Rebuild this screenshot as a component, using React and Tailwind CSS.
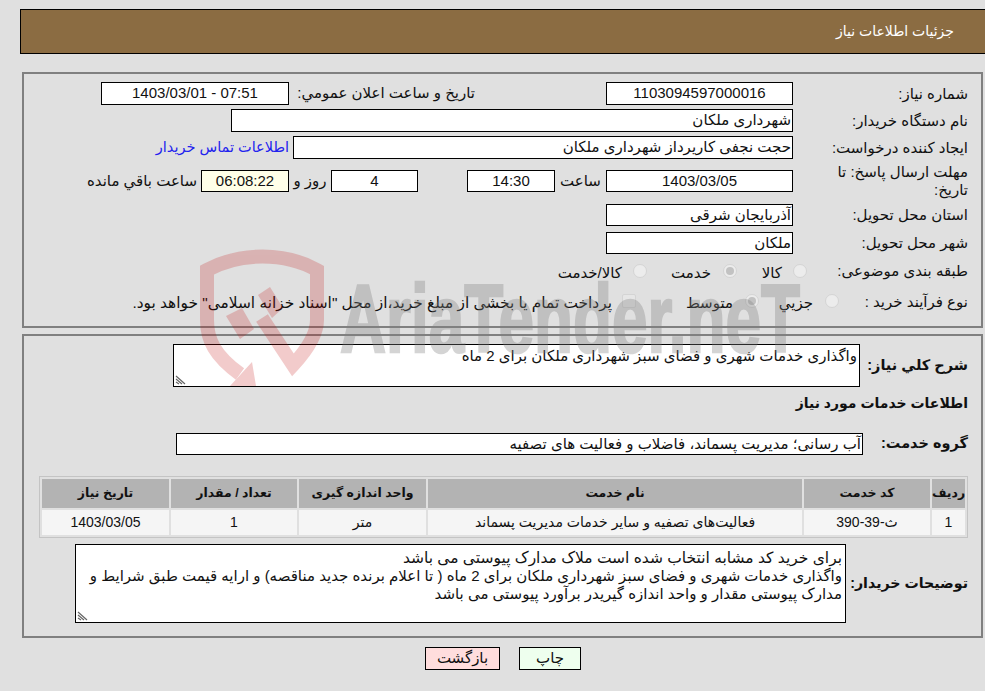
const F = ({ w, h = 22, c = "", children, bg = "bg-white" }) => (
  <div className={`shrink-0 border border-black leading-[20px] ${bg} ${c}`} style={{ width: w, height: h }}>{children}</div>
);
const Radio = ({ on }) => (
  <span className="w-[14px] h-[14px] rounded-full border border-[#d4d4d4] bg-[#ececec] flex items-center justify-center shrink-0">
    {on && <span className="w-2 h-2 rounded-full bg-[#c2c2c2]" />}
  </span>
);
const Row = ({ label, h, w = 175, children, c = "" }) => (
  <div className={`flex items-center ${c}`} style={{ height: h }}>
    <div className="shrink-0 leading-[18px]" style={{ width: w }}>{label}</div>
    {children}
  </div>
);
const Grip = () => (
  <svg className="absolute left-[1px] bottom-[1px]" width="12" height="12" viewBox="0 0 12 12">
    <path d="M1 3L10 11M1 6L7 11M1 9L4 11" stroke="#666" strokeWidth="1.2" fill="none" />
  </svg>
);
export default function App() {
  return (
    <div dir="rtl" className="relative w-[985px] h-[691px] overflow-hidden bg-[#e0e0e0] text-[15px] text-[#111] font-['Liberation_Sans','DejaVu_Sans',sans-serif]">
      <div className="pt-[9px] pl-[20px]">
        <div className="h-[45px] border border-r-0 border-black bg-[#8b6c42] text-white text-[14px] flex items-center pr-[31px]">جزئیات اطلاعات نیاز</div>
      </div>
      <div className="mt-[18px] ml-[22px] mr-[2px] h-[256px] border-2 border-[#808080] pr-[13px] pt-[6px]">
        <Row label="شماره نیاز:" h={27}>
          <F w={187} h={23} c="text-center ml-[131px]">1103094597000016</F>
          <div className="w-[186px]">تاریخ و ساعت اعلان عمومي:</div>
          <F w={188} h={23} c="text-center"><span dir="ltr">1403/03/01 - 07:51</span></F>
        </Row>
        <Row label="نام دستگاه خریدار:" h={27}>
          <F w={562} h={23} c="pr-[1px]">شهرداری ملکان</F>
        </Row>
        <Row label="ایجاد کننده درخواست:" h={27}>
          <F w={500} h={23} c="pr-[1px]">حجت نجفی کاریرداز شهرداری ملکان</F>
          <div className="mr-[4px] text-[#2222ee] text-[14.5px]">اطلاعات تماس خریدار</div>
        </Row>
        <Row label={<>مهلت ارسال پاسخ: تا<br />تاریخ:</>} h={40}>
          <F w={187} c="text-center">1403/03/05</F>
          <div className="w-[51px] text-center">ساعت</div>
          <F w={88} c="text-center">14:30</F>
          <div className="w-[49px]" />
          <F w={87} c="text-center">4</F>
          <div className="w-[42px] text-center">روز و</div>
          <F w={88} bg="bg-[#ffffe8]" c="text-center">06:08:22</F>
          <div className="mr-[4px]">ساعت باقي مانده</div>
        </Row>
        <Row label="استان محل تحویل:" h={28}>
          <F w={187} c="pr-[1px]">آذربایجان شرقی</F>
        </Row>
        <Row label="شهر محل تحویل:" h={27}>
          <F w={187} c="pr-[1px]">ملکان</F>
        </Row>
        <Row label="طبقه بندی موضوعی:" h={29} w={161}>
          <div className="flex items-center">
            <Radio /><span className="w-[45px] mr-[11px] pt-[5px]">کالا</span>
            <Radio on /><span className="w-[64px] mr-[12px] pt-[5px]">خدمت</span>
            <Radio /><span className="mr-[11px] pt-[5px]">کالا/خدمت</span>
          </div>
        </Row>
        <Row label="نوع فرآیند خرید :" h={33} w={129}>
          <div className="flex items-center">
            <Radio /><span className="w-[54px] mr-[12px] pt-[3px]">جزیي</span>
            <Radio on /><span className="w-[97px] mr-[12px] pt-[3px]">متوسط</span>
            <span className="w-[14px] h-[14px] rounded-[2px] border border-[#d4d4d4] bg-[#e6e6e6] shrink-0" />
            <span className="mr-[10px] pt-[3px] whitespace-nowrap text-[15.4px]">پرداخت تمام یا بخشی از مبلغ خرید،از محل "اسناد خزانه اسلامی" خواهد بود.</span>
          </div>
        </Row>
      </div>
      <div className="mt-[6px] ml-[22px] mr-[2px] h-[304px] border-2 border-[#808080] pr-[13px] pt-[8px]">
        <div className="flex items-center h-[45px] pb-[2px]">
          <div className="w-[108px] shrink-0 font-bold text-[14.5px]">شرح كلي نیاز:</div>
          <F w={687} h={43} c="relative pr-[2px] pt-[1px] self-start">واگذاری خدمات شهری و فضای سبز شهرداری ملکان برای 2 ماه<Grip /></F>
        </div>
        <div className="font-bold text-[14px] h-[29px] flex items-center">اطلاعات خدمات مورد نیاز</div>
        <div className="flex items-center h-[52px]">
          <div className="w-[105px] shrink-0 font-bold text-[14.5px]">گروه خدمت:</div>
          <F w={687} h={22} c="pr-[1px]">آب رسانی؛ مدیریت پسماند، فاضلاب و فعالیت های تصفیه</F>
        </div>
        <div className="mt-[6px] ml-[15px] border border-[#c4c4c4] p-[2px]">
          <div className="grid grid-cols-[33px_126px_374px_127px_126px_127px] gap-[2px] text-center">
            {["ردیف","کد خدمت","نام خدمت","واحد اندازه گیری","تعداد / مقدار","تاریخ نیاز"].map(t => (
              <div key={t} className="h-[29px] bg-[#b3b3b3] font-bold text-[12.5px] flex items-center justify-center whitespace-nowrap">{t}</div>
            ))}
            {["1","ث-39-390","فعالیت‌های تصفیه و سایر خدمات مدیریت پسماند","متر","1","1403/03/05"].map((t,i) => (
              <div key={i} className="h-[25px] bg-[#f5f5f5] text-[14px] flex items-center justify-center whitespace-nowrap">{t}</div>
            ))}
          </div>
        </div>
        <div className="flex items-center mt-[6px]">
          <div className="w-[122px] shrink-0 font-bold text-[14.2px] whitespace-nowrap">توضیحات خریدار:</div>
          <F w={771} h={79} c="relative px-[3px] pt-[4px] !leading-[18px]">
            <span className="text-[15.5px]">برای خرید کد مشابه انتخاب شده است ملاک مدارک پیوستی می باشد</span><br />
            واگذاری خدمات شهری و فضای سبز شهرداری ملکان برای 2 ماه ( تا اعلام برنده جدید مناقصه) و ارایه قیمت طبق شرایط و مدارک پیوستی مقدار و واحد اندازه گیریدر برآورد پیوستی می باشد
            <Grip />
          </F>
        </div>
      </div>
      <div className="flex justify-center gap-[19px] mt-[9px] pl-[21px]">
        <div className="w-[62px] h-[23px] border border-black bg-[#eeffee] flex items-center justify-center">چاپ</div>
        <div className="w-[75px] h-[23px] border border-black bg-[#ffdddd] flex items-center justify-center">بازگشت</div>
      </div>
      <svg className="absolute inset-0 pointer-events-none" width="985" height="691" viewBox="0 0 985 691">
        <g opacity="0.2" fill="#c00000">
          <path d="M240 374C215 356 207 340 207 320V270C240 252 285 252 317 270V320C317 335 305 352 293 365L262 318" fill="none" stroke="#c00000" strokeWidth="14" />
          <path d="M226 316L240 339L254 329L242 308ZM258 295L270 287L283 308L272 318ZM230 386L252 362L256 386Z" />
        </g>
        <text x="340" y="352" className="[direction:ltr]" fontFamily="'Liberation Sans',sans-serif" fontWeight="700" fontSize="96" textLength="460" lengthAdjust="spacingAndGlyphs" fill="#808080" stroke="#808080" strokeWidth="2.5" opacity="0.33">AriaTender.neT</text>
      </svg>
    </div>
  );
}
